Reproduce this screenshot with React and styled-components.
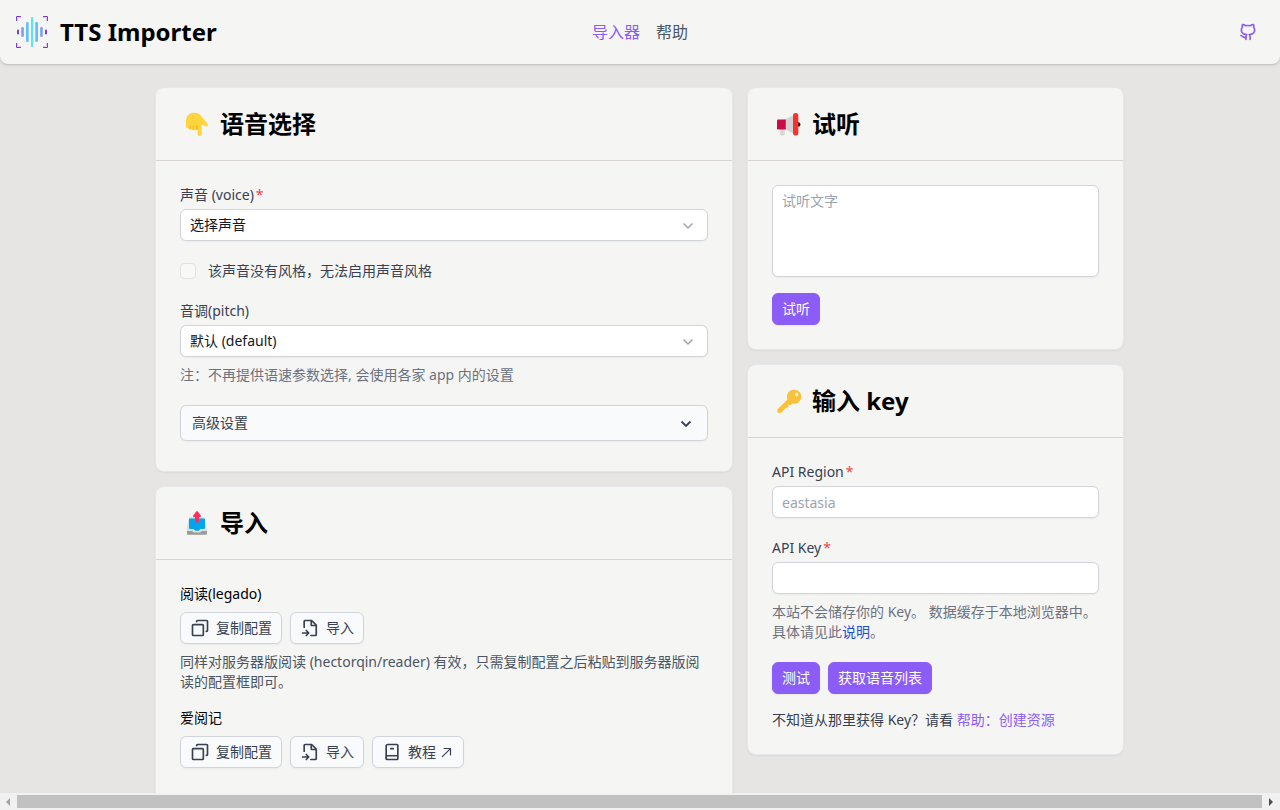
import React from "react";
import styled, { createGlobalStyle } from "styled-components";

const GlobalStyle = createGlobalStyle`
  *, *::before, *::after { box-sizing: border-box; }
  body {
    margin: 0;
    background: #e7e5e4;
    color: #000;
    font-family: "Noto Sans", "Noto Sans CJK SC", sans-serif;
    font-size: 14px;
    line-height: 20px;
  }
  h1, h2, h3, p { margin: 0; }
  button, input, select, textarea { font: inherit; }
  svg { display: block; flex: none; overflow: visible; }
`;

const Page = styled.div`
  display: flex;
  flex-direction: column;
  height: 100vh;
  overflow: hidden;
`;

const Header = styled.header`
  flex: none;
  display: grid;
  grid-template-columns: 1fr auto 1fr;
  align-items: center;
  height: 64px;
  padding: 0 16px;
  background: #f5f5f4;
  border-radius: 0 0 8px 8px;
  box-shadow: 0 1px 3px rgba(0, 0, 0, 0.1), 0 1px 2px rgba(0, 0, 0, 0.1);
`;

const Brand = styled.div`
  display: flex;
  align-items: center;
  gap: 12px;
`;

const BrandName = styled.h1`
  font-size: 24px;
  line-height: 32px;
  font-weight: 700;
`;

const Nav = styled.nav`
  display: flex;
  gap: 16px;
  font-size: 16px;
  line-height: 24px;
`;

const NavLink = styled.a`
  color: ${(p) => (p.$active ? "#8b5cf6" : "#4b5563")};
  text-decoration: none;
`;

const IconLink = styled.a`
  justify-self: end;
  padding: 6px;
  color: #8b5cf6;
`;

const Content = styled.div`
  flex: 1;
  min-height: 0;
  overflow: hidden;
  padding: 24px 17px 0 16px;
`;

const Columns = styled.main`
  display: grid;
  grid-template-columns: 576fr 375fr;
  align-items: start;
  gap: 16px;
  max-width: 967px;
  margin: 0 auto;
`;

const Column = styled.div`
  display: flex;
  flex-direction: column;
  gap: 16px;
  min-width: 0;
`;

const CardBox = styled.section`
  background: #f5f5f4;
  border-radius: 8px;
  box-shadow: 0 0 0 1px #e5e7eb, 0 1px 3px rgba(0, 0, 0, 0.1);
`;

const CardHeader = styled.div`
  display: flex;
  align-items: center;
  gap: 12px;
  padding: 20px 28px;
  border-bottom: 1px solid #d6d3d1;
`;

const CardTitle = styled.h2`
  font-size: 24px;
  line-height: 32px;
  font-weight: 700;
`;

const CardBody = styled.div`
  display: flex;
  flex-direction: column;
  gap: ${(p) => p.$gap || 20}px;
  padding: 24px 24px ${(p) => p.$bottom || 24}px;
`;

const FieldBox = styled.div`
  display: flex;
  flex-direction: column;
`;

const Label = styled.label`
  margin-bottom: 4px;
  color: #374151;
`;

const Required = styled.span`
  margin-left: 2px;
  color: #ef4444;
`;

const control = `
  display: block;
  width: 100%;
  margin: 0;
  padding: 5px 9px;
  border: 1px solid #d1d5db;
  border-radius: 6px;
  background: #fff;
  color: #111827;
  box-shadow: 0 1px 2px rgba(0, 0, 0, 0.05);
  outline: none;
  &::placeholder { color: #9ca3af; opacity: 1; }
`;

const TextInput = styled.input`
  ${control}
  height: 32px;
`;

const TextArea = styled.textarea`
  ${control}
  height: 92px;
  resize: none;
`;

const SelectWrap = styled.div`
  position: relative;
  color: #9ca3af;
  svg {
    position: absolute;
    right: 12px;
    top: 8px;
    pointer-events: none;
  }
`;

const Select = styled.select`
  ${control}
  height: 32px;
  appearance: none;
`;

const Help = styled.p`
  margin-top: 8px;
  color: ${(p) => (p.$dark ? "#4b5563" : "#6b7280")};
`;

const CheckRow = styled.label`
  display: flex;
  align-items: center;
  gap: 12px;
  color: #374151;
`;

const Checkbox = styled.input`
  appearance: none;
  width: 16px;
  height: 16px;
  margin: 0;
  border: 1px solid #e0e2e6;
  border-radius: 4px;
  background: #f8f8f7;
`;

const Disclosure = styled.button`
  display: flex;
  align-items: center;
  justify-content: space-between;
  height: 36px;
  padding: 0 13px 0 11px;
  border: 1px solid #d1d5db;
  border-radius: 6px;
  background: #f9fafb;
  color: #374151;
  box-shadow: 0 1px 2px rgba(0, 0, 0, 0.05);
`;

const ButtonRow = styled.div`
  display: flex;
  gap: 8px;
`;

const Button = styled.button`
  display: inline-flex;
  align-items: center;
  gap: 6px;
  height: 32px;
  padding: 0 9px;
  border: 1px solid ${(p) => (p.$primary ? "#8b5cf6" : "#d1d5db")};
  border-radius: 6px;
  background: ${(p) => (p.$primary ? "#8b5cf6" : "#f9fafb")};
  color: ${(p) => (p.$primary ? "#fff" : "#374151")};
  box-shadow: 0 1px 2px rgba(0, 0, 0, 0.05);
  white-space: nowrap;
`;

const WithArrow = styled.span`
  display: inline-flex;
  align-items: center;
  gap: 4px;
`;

const Group = styled.div`
  display: flex;
  flex-direction: column;
`;

const GroupTitle = styled.h3`
  margin-bottom: 8px;
  font-size: 14px;
  line-height: 20px;
  font-weight: 400;
`;

const Note = styled.p`
  margin-top: -4px;
  color: #374151;
`;

const Link = styled.a`
  color: ${(p) => (p.$blue ? "#1d4ed8" : "#8b5cf6")};
  text-decoration: none;
`;

const ScrollTrack = styled.div`
  flex: none;
  display: flex;
  align-items: center;
  justify-content: space-between;
  height: 17px;
  padding: 0 7px 0 6px;
  gap: 7px;
  background: #f1f1f1;
`;

const ScrollThumb = styled.div`
  flex: 1;
  height: 13px;
  background: #c1c1c1;
`;

const LogoIcon = () => (
  <svg width="32" height="32" viewBox="0 0 32 32" fill="none" aria-hidden="true">
    <path d="M.5 5V.5H5M27 .5h4.500V5M.5 27v4.500H5M27 31.500h4.500V27" stroke="#7c3bdc" />
    <path d="M1.500 5V1.500H5M27 1.500h3.500V5M1.500 27v3.500H5M27 30.500h3.500V27" stroke="#d9c8f3" />
    <rect x="1" y="13.500" width="2" height="5" rx="1" fill="#7c3bdc" />
    <rect x="29" y="13.500" width="2" height="5" rx="1" fill="#7c3bdc" />
    <rect x="5.300" y="11" width="2.500" height="10" rx="1.200" fill="#7d9cf3" />
    <rect x="24.200" y="11" width="2.500" height="10" rx="1.200" fill="#7d9cf3" />
    <rect x="10" y="6" width="2.700" height="20" rx="1.200" fill="#63bffc" />
    <rect x="19.300" y="6" width="2.700" height="20" rx="1.200" fill="#63bffc" />
    <rect x="15" y="1" width="2.200" height="30" rx="1" fill="#5ce3fb" />
  </svg>
);

const LineIcon = ({ size = 20, width = 2, children }) => (
  <svg
    width={size}
    height={size}
    viewBox="0 0 24 24"
    fill="none"
    stroke="currentColor"
    strokeWidth={width}
    strokeLinecap="round"
    strokeLinejoin="round"
    aria-hidden="true"
  >
    {children}
  </svg>
);

const GithubIcon = () => (
  <LineIcon>
    <path d="M9.500 21v-3.700c0-1 .3-1.700 1-2.300C6.500 14.800 4 12.800 4 9.600c0-1.400.4-2.400 1.200-3.400-.3-1-.2-2.200.2-3.200 1.500 0 2.700.6 3.900 1.500 1.800-.4 3.600-.4 5.400 0C15.900 3.600 17.100 3 18.600 3c.4 1 .5 2.200.2 3.200.8 1 1.200 2 1.200 3.400 0 3.200-2.500 5.200-6.500 5.400.7.600 1 1.300 1 2.300V21" />
    <path d="M9.500 18.500c-3.500 1-3.300-1.500-6-2.300" />
  </LineIcon>
);

const CopyIcon = () => (
  <LineIcon>
    <rect x="3" y="8" width="13" height="13" rx="1" />
    <path d="M8 4.500V4a1 1 0 0 1 1-1h11a1 1 0 0 1 1 1v11a1 1 0 0 1-1 1h-.5" />
  </LineIcon>
);

const ImportIcon = () => (
  <LineIcon>
    <path d="M5 11V4a1 1 0 0 1 1-1h8l5.500 5.500V20a1 1 0 0 1-1 1H13" />
    <path d="M13.500 3.500V8.500a.5.500 0 0 0 .5.500h5" />
    <path d="M3 18h6.500M7.500 15l3 3-3 3" />
  </LineIcon>
);

const BookIcon = () => (
  <LineIcon>
    <path d="M5 19V5a2 2 0 0 1 2-2h11a1 1 0 0 1 1 1v16a1 1 0 0 1-1 1H7a2 2 0 0 1 0-4.500h12" />
    <path d="M10.500 8h3" />
  </LineIcon>
);

const ArrowIcon = () => (
  <LineIcon size={14}>
    <path d="M4 20 17 7M7 6h11v11" />
  </LineIcon>
);

const ChevronIcon = ({ bold }) => (
  <svg
    width="16"
    height="16"
    viewBox="0 0 16 16"
    fill="none"
    stroke="currentColor"
    strokeWidth={bold ? "1.800" : "1.500"}
    aria-hidden="true"
  >
    <path d="M3.500 6.500 8 11 12.500 6.500" />
  </svg>
);

const HandIcon = () => (
  <svg width="24" height="24" viewBox="0 0 24 24" aria-hidden="true">
    <path
      fill="#ffd53e"
      d="M2 8.500C2.200 4 5 .8 10 .8c4 0 6 1.400 7.500 4l6 6.600c1.600 1.900-.5 3.800-2.500 2.700l-3.300-1.900v10c0 2.400-4 2.400-4 0V17.500l-.8.5c-.8.6-2 .6-2.700 0-.9.4-2 .3-2.600-.4-1 .3-1.900 0-2.300-.8C2.800 16.600 2 15.300 2 13z"
    />
    <path fill="none" stroke="#f0ab25" strokeWidth=".8" strokeLinecap="round" d="M6.300 14v2.500M9.200 14v3M12.300 13.500V17M13.700 17v-3" />
  </svg>
);

const TrayIcon = () => (
  <svg width="24" height="24" viewBox="0 0 24 24" aria-hidden="true">
    <path fill="#dedede" d="M5 6h15l3 12v4.500a1.200 1.200 0 0 1-1.200 1.200H4.200A1.200 1.200 0 0 1 3 22.500V16z" />
    <path fill="#9b9b9b" d="M3 20h5l2 1.500h6l2-1.500h5v2.500a1.200 1.200 0 0 1-1.200 1.200H4.200A1.200 1.200 0 0 1 3 22.500z" />
    <path fill="#00a6ed" d="M6 7.500h14a1 1 0 0 1 1 1V17a1 1 0 0 1-1 1h-3.500l-2 1.700h-3L9.500 18H6a1 1 0 0 1-1-1V8.500a1 1 0 0 1 1-1z" />
    <path fill="#f92f60" d="M12.200.6c.5-.6 1.100-.6 1.600 0l3 4c.5.700.1 1.400-.7 1.400H15v5.500h-4V6H9.900c-.8 0-1.200-.7-.7-1.400z" />
  </svg>
);

const MegaphoneIcon = () => (
  <svg width="24" height="24" viewBox="0 0 24 24" aria-hidden="true">
    <circle cx="22.200" cy="12.500" r="2.300" fill="#212121" />
    <path fill="#d9d9d9" d="M3.800 17h5v5.300c0 1.800-5 1.800-5 0z" />
    <path fill="#d3d3d3" d="M9 7.500 18 3v19l-8-4.500z" />
    <path fill="#ca0b4a" d="M2.200 7.500h7.600v10H2.200A1.200 1.200 0 0 1 1 16.300V8.700A1.200 1.200 0 0 1 2.200 7.500z" />
    <rect x="17" y="1" width="5.300" height="22.500" rx="2.500" fill="#f8312f" />
  </svg>
);

const KeyIcon = () => (
  <svg width="24" height="24" viewBox="0 0 24 24" aria-hidden="true">
    <path
      fill="#f9c23c"
      fillRule="evenodd"
      d="M18 .8a7 7 0 1 1-1.600 13.700L15 16.100h-2.500l-.4 2.300-2.200.5-3.900 4c-1.300 1.500-2.700 1.600-4 .7-1.200-1-1.300-2.500-.2-3.700l9.700-9.300A7 7 0 0 1 18 .8zm2.500 3a1.700 1.700 0 1 0 0 3.400 1.700 1.700 0 0 0 0-3.400z"
    />
  </svg>
);

const ScrollArrow = ({ right }) => (
  <svg width="4" height="8" viewBox="0 0 4 8" aria-hidden="true">
    <path d={right ? "M0 0 4 4 0 8z" : "M4 0 0 4l4 4z"} fill={right ? "#505050" : "#a3a3a3"} />
  </svg>
);

const Card = ({ icon, title, gap, bottom, children }) => (
  <CardBox>
    <CardHeader>
      {icon}
      <CardTitle>{title}</CardTitle>
    </CardHeader>
    <CardBody $gap={gap} $bottom={bottom}>{children}</CardBody>
  </CardBox>
);

const Field = ({ id, label, required, children }) => (
  <FieldBox>
    <Label htmlFor={id}>
      {label}
      {required && <Required>*</Required>}
    </Label>
    {children}
  </FieldBox>
);

const SelectField = ({ id, option }) => (
  <SelectWrap>
    <Select id={id}>
      <option>{option}</option>
    </Select>
    <ChevronIcon />
  </SelectWrap>
);

const CopyButton = () => (
  <Button type="button">
    <CopyIcon />
    复制配置
  </Button>
);

const ImportButton = () => (
  <Button type="button">
    <ImportIcon />
    导入
  </Button>
);

export default function App() {
  return (
    <Page>
      <GlobalStyle />
      <Header>
        <Brand>
          <LogoIcon />
          <BrandName>TTS Importer</BrandName>
        </Brand>
        <Nav>
          <NavLink href="#importer" $active>导入器</NavLink>
          <NavLink href="#help">帮助</NavLink>
        </Nav>
        <IconLink href="#github" aria-label="GitHub">
          <GithubIcon />
        </IconLink>
      </Header>

      <Content>
        <Columns>
          <Column>
            <Card icon={<HandIcon />} title="语音选择" bottom={30}>
              <Field id="voice" label="声音 (voice)" required>
                <SelectField id="voice" option="选择声音" />
              </Field>
              <CheckRow>
                <Checkbox type="checkbox" disabled />
                该声音没有风格，无法启用声音风格
              </CheckRow>
              <Field id="pitch" label="音调(pitch)">
                <SelectField id="pitch" option="默认 (default)" />
                <Help>注：不再提供语速参数选择, 会使用各家 app 内的设置</Help>
              </Field>
              <Disclosure type="button" aria-expanded="false">
                高级设置
                <ChevronIcon bold />
              </Disclosure>
            </Card>

            <Card icon={<TrayIcon />} title="导入" gap={16} bottom={48}>
              <Group>
                <GroupTitle>阅读(legado)</GroupTitle>
                <ButtonRow>
                  <CopyButton />
                  <ImportButton />
                </ButtonRow>
                <Help $dark>
                  同样对服务器版阅读 (hectorqin/reader) 有效，只需复制配置之后粘贴到服务器版阅读的配置框即可。
                </Help>
              </Group>
              <Group>
                <GroupTitle>爱阅记</GroupTitle>
                <ButtonRow>
                  <CopyButton />
                  <ImportButton />
                  <Button type="button">
                    <BookIcon />
                    <WithArrow>
                      教程
                      <ArrowIcon />
                    </WithArrow>
                  </Button>
                </ButtonRow>
              </Group>
            </Card>
          </Column>

          <Column>
            <Card icon={<MegaphoneIcon />} title="试听" gap={16}>
              <TextArea placeholder="试听文字" aria-label="试听文字" />
              <ButtonRow>
                <Button type="button" $primary>试听</Button>
              </ButtonRow>
            </Card>

            <Card icon={<KeyIcon />} title="输入 key">
              <Field id="region" label="API Region" required>
                <TextInput id="region" placeholder="eastasia" />
              </Field>
              <Field id="key" label="API Key" required>
                <TextInput id="key" />
                <Help>
                  本站不会储存你的 Key。 数据缓存于本地浏览器中。具体请见此<Link href="#about" $blue>说明</Link>。
                </Help>
              </Field>
              <ButtonRow>
                <Button type="button" $primary>测试</Button>
                <Button type="button" $primary>获取语音列表</Button>
              </ButtonRow>
              <Note>
                不知道从那里获得 Key？请看 <Link href="#create">帮助：创建资源</Link>
              </Note>
            </Card>
          </Column>
        </Columns>
      </Content>

      <ScrollTrack aria-hidden="true">
        <ScrollArrow />
        <ScrollThumb />
        <ScrollArrow right />
      </ScrollTrack>
    </Page>
  );
}
